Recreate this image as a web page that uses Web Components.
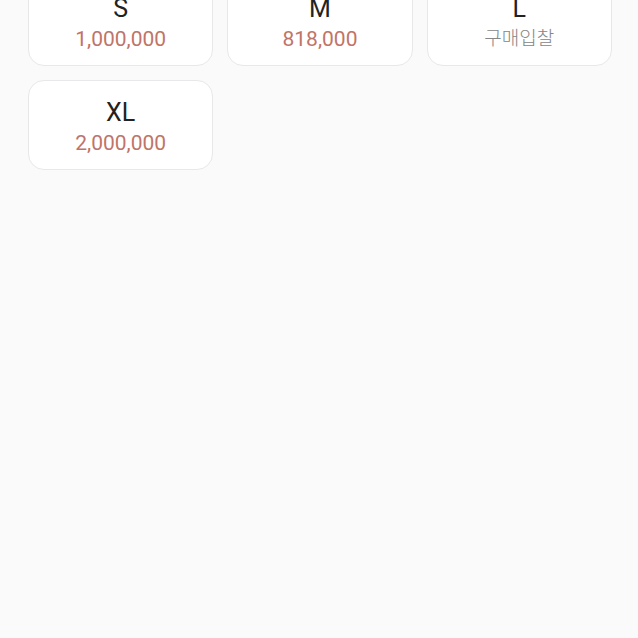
<!DOCTYPE html>
<html lang="ko">
<head>
<meta charset="utf-8">
<title>사이즈 선택</title>
<style>
body{margin:0;background:#fafafa;font-family:Roboto,"Noto Sans CJK KR",sans-serif}
</style>
</head>
<body>
<size-grid>
<size-option size="S">1,000,000</size-option>
<size-option size="M">818,000</size-option>
<size-option size="L" empty>구매입찰</size-option>
<size-option size="XL">2,000,000</size-option>
</size-grid>
<script>
class SizeGrid extends HTMLElement{
  constructor(){
    super();
    this.attachShadow({mode:'open'}).innerHTML=`<style>
    :host{display:grid;grid-template-columns:repeat(3,1fr);gap:14px;padding:0 26px 0 28px;margin-top:-24px}
    </style><slot></slot>`;
  }
}
class SizeOption extends HTMLElement{
  constructor(){
    super();
    this.attachShadow({mode:'open'}).innerHTML=`<style>
    :host{display:block}
    button{box-sizing:border-box;width:100%;display:flex;flex-direction:column;align-items:center;padding:16px 0 12px;border:1px solid #e8e8ea;border-radius:16px;background:#fff;font-family:inherit}
    .size{font-size:25px;line-height:32px;color:#222}
    .price{font-size:21px;line-height:28px;color:#c07468}
    :host([empty]) .price{font-size:19px;font-weight:300;color:#868686}
    </style><button type="button"><span class="size"></span><span class="price"><slot></slot></span></button>`;
  }
  connectedCallback(){
    this.shadowRoot.querySelector('.size').textContent=this.getAttribute('size');
  }
}
customElements.define('size-grid',SizeGrid);
customElements.define('size-option',SizeOption);
</script>
</body>
</html>
